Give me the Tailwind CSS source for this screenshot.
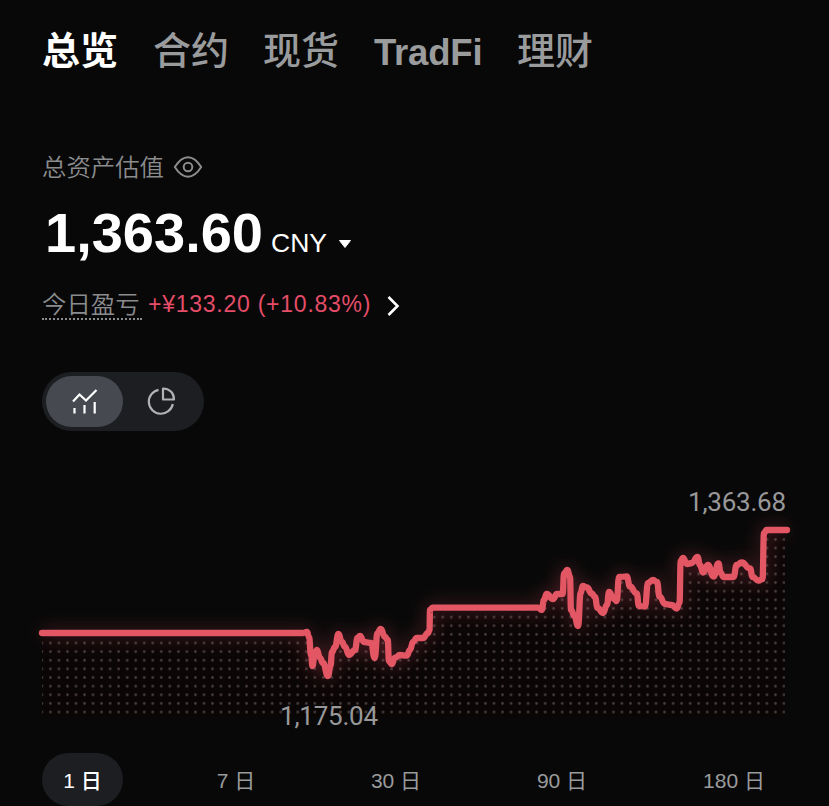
<!DOCTYPE html>
<html lang="zh-CN">
<head>
    <meta charset="UTF-8">
    <meta name="viewport" content="width=device-width, initial-scale=1.0">
    <title>总览</title>
    <script src="https://cdn.jsdelivr.net/npm/@tailwindcss/browser@4"></script>
</head>
<body class="bg-[#080808] font-['Liberation_Sans','Noto_Sans_CJK_SC',sans-serif] text-[#9a9b9d] h-[806px] overflow-hidden">
    <!-- Tabs -->
    <nav class="flex items-center h-[96px] pl-[42px] gap-[35px] font-['Noto_Sans_CJK_SC',sans-serif] text-[38px] leading-none font-medium whitespace-nowrap">
        <a class="text-white font-bold w-[76px]">总览</a>
        <a class="w-[75px]">合约</a>
        <a class="w-[76px]">现货</a>
        <a class="w-[108px] font-['Liberation_Sans',sans-serif] font-bold text-[36.5px] tracking-[-0.2px] pt-[10px]">TradFi</a>
        <a class="w-[75px]">理财</a>
    </nav>

    <section class="pl-[42px] pt-[52px]">
        <div class="flex items-center h-[38px] gap-[9px]">
            <span class="font-['Inter','Noto_Sans_CJK_SC',sans-serif] text-[24.4px] leading-none font-[350] text-[#8b8c8e]">总资产估值</span>
            <svg class="w-[30px] h-[24px]" viewBox="0 0 30 24" fill="none" stroke="#8b8c8e" stroke-width="2">
                <path d="M1.8 12Q8 2.200 15 2.200T28.200 12Q22 21.800 15 21.800T1.800 12Z" stroke-linejoin="round" />
                <circle cx="15" cy="12" r="4.300" />
            </svg>
        </div>

        <div class="flex items-baseline h-[96px] pt-[13px] text-white whitespace-nowrap">
            <span class="w-[229px] pl-[3px] text-[56px] leading-[68px] font-bold">1,363.60</span>
            <span class="w-[67px] text-[26.5px]">CNY</span>
            <svg class="w-[14px] h-[16px]" viewBox="0 0 14 16"><path d="M1.500 4.500H12.500L7 11.500Z" fill="#fff" stroke="#fff" stroke-linejoin="round" /></svg>
        </div>

        <div class="flex items-center h-[44px] whitespace-nowrap">
            <span class="w-[100px] h-[31px] font-['Inter','Noto_Sans_CJK_SC',sans-serif] text-[24.4px] leading-[30px] font-[350] text-[#8b8c8e] border-b-2 border-dotted border-[#8b8c8e]">今日盈亏</span>
            <span class="w-[244px] pl-[6px] text-[23px] leading-none tracking-[0.75px] text-[#e54d68]">+¥133.20 (+10.83%)</span>
            <svg class="w-[14px] h-[24px] mt-[3px]" viewBox="0 0 14 22" fill="none" stroke="#fff" stroke-width="2.600"><path d="M2.500 2L11.500 11L2.500 20" /></svg>
        </div>

        <!-- Chart type switch -->
        <div class="mt-[46px] flex items-center w-[162px] h-[59px] p-1 rounded-full bg-[#1c1e21]">
            <div class="flex items-center justify-center w-[77px] h-[51px] rounded-full bg-[#464950]">
                <svg class="w-[30px] h-[30px]" viewBox="0 0 30 30" fill="none" stroke="#fff" stroke-width="2.200">
                    <path d="M3 14.500L9.500 7.500L16 13.500L26.500 3M4.500 21V26.500M14.500 18V26.500M24.700 15V26.500" />
                </svg>
            </div>
            <div class="flex items-center justify-center w-[75px] h-[51px]">
                <svg class="w-[30px] h-[30px]" viewBox="0 0 30 30" fill="none" stroke="#b1b2b5" stroke-width="2.200">
                    <path d="M12.500 2.800A12.100 12.100 0 1 0 26.800 17M17 1.500V12.500H28C28 6 23.500 1.500 17 1.500Z" stroke-linejoin="round" />
                </svg>
            </div>
        </div>
    </section>

    <!-- Asset curve -->
    <svg class="block w-full h-[322px]" viewBox="0 431 829 322">
        <defs>
            <pattern id="dots" x="37.600" y="638.700" width="8.530" height="8.630" patternUnits="userSpaceOnUse">
                <circle cx="4.265" cy="4.300" r="1.400" fill="#463b3a" />
            </pattern>
            <filter id="glow" filterUnits="userSpaceOnUse" x="0" y="431" width="829" height="322">
                <feGaussianBlur stdDeviation="9" />
            </filter>
            <clipPath id="area"><path id="fill" /></clipPath>
        </defs>
        <g clip-path="url(#area)">
            <rect x="41" y="500" width="744" height="217" fill="#0b0606" />
            <rect x="41" y="500" width="744" height="217" fill="url(#dots)" />
        </g>
        <path id="halo" fill="none" stroke="#e54d60" stroke-opacity="0.350" stroke-width="7" filter="url(#glow)" />
        <path id="line" fill="none" stroke="#e35664" stroke-width="6.300" stroke-linecap="round" stroke-linejoin="round" />
        <g class="font-['Roboto',sans-serif] font-normal" font-size="26" fill="#98989a">
            <text x="688" y="511" textLength="98">1,363.68</text>
            <text x="280" y="725" textLength="98">1,175.04</text>
        </g>
    </svg>

    <!-- Ranges -->
    <div class="flex items-center h-[53px] pl-[42px] text-[21px] whitespace-nowrap">
        <button class="w-[81px] h-[53px] pt-[2px] rounded-full bg-[#1c1e21] text-white font-medium">1 日</button>
        <button class="w-[66px] ml-[80px] pt-[2px]">7 日</button>
        <button class="w-[66px] ml-[94px] pt-[2px]">30 日</button>
        <button class="w-[66px] ml-[100px] pt-[2px]">90 日</button>
        <button class="w-[66px] ml-[106px] pt-[2px]">180 日</button>
    </div>

    <script>
        const points = [
            [42, 633], [303, 633], [307, 632], [309, 637], [311, 655], [312.5, 666], [314.5, 655], [317, 650], [320, 658], [323, 663],
            [328, 676], [330.5, 666], [332, 652], [335, 647], [338.5, 634], [341.7, 641.7], [345, 646.7], [349, 655],
            [355, 650], [357.5, 638], [360, 636], [364, 642], [371, 643], [374.7, 658], [377.5, 633], [380.7, 629],
            [385, 637], [387.7, 640], [389, 661], [391.7, 664], [395, 657.7], [400, 655], [406.7, 655.7], [410, 650],
            [413, 642], [416.7, 638], [423, 638], [428, 633], [429.5, 630], [430, 610], [432.5, 607.7], [538, 607.7], [541.7, 610],
            [544, 600], [546.7, 594], [553, 599], [557, 594], [562.7, 594], [564, 573.5], [567.5, 570], [570, 577],
            [571, 610], [574.5, 616], [578, 626], [580.7, 593], [582.7, 586], [587, 587.5], [591.7, 593.5], [595, 597],
            [597.5, 608], [603, 613], [607, 605], [609, 592], [613.5, 598.5], [616.7, 601], [619, 577], [626.7, 576.5],
            [630, 586.5], [636.7, 593.5], [639, 606], [645, 606.5], [648, 583], [653, 580], [657, 582],
            [659.5, 596.5], [665, 604], [671.7, 605], [676.7, 608.5], [679.5, 603], [680.7, 561], [683, 558], [687, 564],
            [691.7, 563], [697.5, 557], [700, 565], [703, 572.5], [708, 565], [713.5, 576.5], [718.5, 563.5],
            [720.7, 573], [723.5, 577], [733.5, 577], [736.7, 565], [741.7, 562.5], [750, 568.5], [752.7, 577],
            [758.5, 580.7], [762.5, 579], [764, 533], [766.7, 530], [787, 530]
        ];

        // Each segment leaves and enters its points horizontally
        let d = `M${points[0]}`;
        for (let i = 1; i < points.length; i++) {
            const [x0, y0] = points[i - 1];
            const [x1, y1] = points[i];
            const mid = (x0 + x1) / 2;
            d += `C${mid} ${y0} ${mid} ${y1} ${x1} ${y1}`;
        }
        document.getElementById('line').setAttribute('d', d);
        document.getElementById('halo').setAttribute('d', d);
        document.getElementById('fill').setAttribute('d', d + 'V717H42Z');
    </script>
</body>
</html>
